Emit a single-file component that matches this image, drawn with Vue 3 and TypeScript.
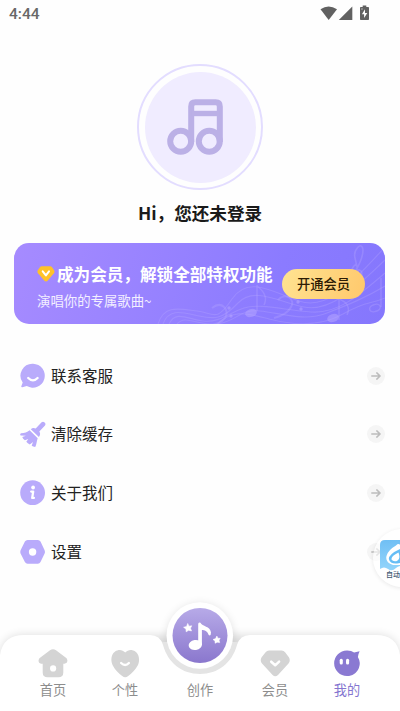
<script setup lang="ts">
interface MenuItem { id: string; label: string }
interface Tab { id: string; label: string }

const menu: MenuItem[] = [
  { id: 'service', label: '联系客服' },
  { id: 'clean', label: '清除缓存' },
  { id: 'about', label: '关于我们' },
  { id: 'settings', label: '设置' },
]
const tabs: Tab[] = [
  { id: 'home', label: '首页' },
  { id: 'style', label: '个性' },
  { id: 'create', label: '创作' },
  { id: 'vip', label: '会员' },
  { id: 'mine', label: '我的' },
]
const active = 'mine'
</script>

<template>
  <div class="screen">
    <header class="status">
      <span class="time">4:44</span>
      <svg class="status-icons" width="50" height="18" viewBox="320 4 50 18" fill="#616161">
        <path d="M320.5 9.3Q328.500 3.500 337 9.300L328.700 20Z" />
        <path d="M352.300 6.500V20H338.800Z" />
        <path d="M360.800 7h1.900V5.400h3.600V7h1.900q.8 0 .8.800v11.400q0 .8-.8.800h-7.400q-.8 0-.8-.8V7.800q0-.8.800-.8Z" />
        <path d="M365 9.300l-3.100 5h2.200v3.800l3.200-5h-2.300Z" fill="#fff" />
        <path d="M361.200 8.400h1.500v1.200h-1.500Z" fill="#ccc" />
      </svg>
    </header>

    <section class="profile">
      <div class="ring">
        <div class="avatar">
          <svg width="58" height="58" viewBox="166 98 58 58" fill="none" stroke="#bbb0e6" stroke-width="6">
            <circle cx="180.700" cy="141.200" r="10.500" />
            <circle cx="209.300" cy="141.200" r="10.500" />
            <path d="M191.200 142V106.500Q191.200 102.300 195.400 102.300H215.600Q219.800 102.300 219.800 106.500V142" />
            <path d="M191.200 113.500H219.800" stroke-width="5.400" />
          </svg>
        </div>
      </div>
      <h1>Hi，您还未登录</h1>
    </section>

    <section class="banner">
      <svg class="staff" width="371" height="81" viewBox="14 243 371 81" fill="none" stroke="#b8a8ff" stroke-opacity=".32" stroke-width="1.100">
        <path d="M158 324C164 304 180 309 197 311S216 323 232 299S273 292 299 301S347 289 385 247" />
        <path d="M163 324C169 307 184 313 199 316S222 320 238 303S279 302 304 307S353 291 385 260" />
        <path d="M169 324C176 310 187 319 203 321S229 313 244 308S284 310 311 312S358 296 385 273" />
        <path d="M177 324C185 314 198 326 217 324S239 309 260 311S304 322 327 313S365 298 385 286" />
        <path d="M214 328C230 307 250 314 269 319S318 328 343 314S369 305 385 298" />
        <path d="M212 308C222 300 230 310 225 318C221 324 214 325 206 325M278 300C285 292 296 299 291 307C288 313 282 316 274 318" stroke-width="2" />
        <path d="M257 285V311M257 286Q269 295 264 305M339 298V320M339 299Q352 304 347 315M381 278V307" stroke-width="1.500" />
        <path d="M350 285C349 277 363 265 363 250C362 240 353 250 355 258L360 280C360 285 353 286 351 281M356 264C349 270 350 279 357 278C364 277 363 269 357 270" stroke-width="1.600" />
        <g fill="#b8a8ff" fill-opacity=".5" stroke="none">
          <ellipse cx="251" cy="313" rx="6" ry="4" transform="rotate(-18 251 313)" />
          <ellipse cx="333" cy="318" rx="6" ry="4" transform="rotate(-18 333 318)" />
          <circle cx="229" cy="308" r="1.700" /><circle cx="231" cy="316" r="1.700" />
          <circle cx="298" cy="302" r="1.700" /><circle cx="301" cy="309" r="1.700" />
        </g>
        <ellipse cx="375" cy="308" rx="5.500" ry="3.500" transform="rotate(-18 375 308)" stroke-width="1.500" />
      </svg>
      <div class="banner-copy">
        <div class="banner-title">
          <svg width="18" height="16" viewBox="0 0 18 16">
            <path d="M4.700.3h8.600q1 0 1.600.8l2.200 3.200q.9 1.500-.2 2.900l-6.300 7.500q-1.600 1.500-3.200 0L1 7.200Q-.1 5.800.8 4.300l2.300-3.200Q3.700.3 4.700.3Z" fill="#ffc229" />
            <path d="M5.700 5.400L8.900 9.400L12 5.400" fill="none" stroke="#fff" stroke-width="2" stroke-linecap="round" stroke-linejoin="round" />
          </svg>
          <strong>成为会员，解锁全部特权功能</strong>
        </div>
        <p>演唱你的专属歌曲~</p>
      </div>
      <button class="open">开通会员</button>
    </section>

    <ul class="menu">
      <li v-for="item in menu" :key="item.id">
        <svg class="menu-icon" width="26" height="26" viewBox="0 0 26 26" fill="#b9abfb">
          <template v-if="item.id === 'service'">
            <path d="M13.100.7A12 12 0 1 1 6.800 23.100L2.300 24.200Q.7 24.400 1.500 22.700L2.700 19.600A12 12 0 0 1 13.100.7Z" />
            <path d="M8.200 15Q13 19.800 17.600 15" fill="none" stroke="#fff" stroke-width="2.300" stroke-linecap="round" />
          </template>
          <template v-else-if="item.id === 'clean'">
            <path d="M15.700 7.500L21.600 1.200Q23.100.1 24.600 1.400T25 4.500L19.300 10.400Q21.100 13.500 18.900 16.100L10.800 8.200Q13 6 15.700 7.500Z" />
            <path d="M9.600 9.300L17.700 17.300C16.600 20.500 16.700 23.500 15.200 26Q12.900 25.800 11.700 24.800L13 21.100L9.800 23.400Q7.600 22.300 6.300 20.800L8.300 18L4.900 19.200Q2.700 17.800 2.300 16.100L5.900 14.800L.7 14.500Q-.5 13.500.9 12.300C4.500 12 7.400 11.400 9.600 9.300Z" />
          </template>
          <template v-else-if="item.id === 'about'">
            <circle cx="12.600" cy="12.700" r="12.400" />
            <circle cx="13.100" cy="7.500" r="1.900" fill="#fff" />
            <path d="M11.200 11.600H13.200L12.200 17.900H13.900" fill="none" stroke="#fff" stroke-width="2.300" stroke-linecap="round" stroke-linejoin="round" />
          </template>
          <template v-else>
            <path d="M7.600 1H17.900Q19.600 1 20.500 2.600L24.500 11Q25.400 12.900 24.500 14.700L20.500 23Q19.600 24.700 17.900 24.700H7.600Q5.800 24.700 4.900 23L.7 14.700Q-.1 12.900.7 11L4.900 2.600Q5.800 1 7.600 1Z" />
            <circle cx="12.600" cy="13" r="3.700" fill="#fff" />
          </template>
        </svg>
        <span>{{ item.label }}</span>
        <svg class="go" width="18" height="18" viewBox="0 0 18 18">
          <circle cx="9" cy="9" r="9" fill="#f5f5f5" />
          <path d="M4.800 9H13M9.800 5.900L13.100 9L9.800 12.100" fill="none" stroke="#bcbcbc" stroke-width="1.500" stroke-linecap="round" stroke-linejoin="round" />
        </svg>
      </li>
    </ul>

    <aside class="float">
      <svg width="28" height="31" viewBox="0 0 28 31">
        <defs><linearGradient id="drop" x2="0" y2="1"><stop stop-color="#70bff4" /><stop offset="1" stop-color="#93d5fb" /></linearGradient></defs>
        <path d="M5 0H28V31H0V5Q0 0 5 0Z" fill="url(#drop)" />
        <path d="M16 5.500Q19 2.500 21 6Q26 4 28 9V25H13Q5 23 6.500 16Q8 10 16 5.500Z" fill="#fff" />
        <path d="M20 9Q9 14 8.800 19Q10 24 17 23.500Q24 23 24 17Q23 13 20 9Z" fill="#66bdf5" />
        <path d="M18.500 12.500Q11 16 11.500 19.500Q13 22 17 21Q21 19.500 18.500 12.500Z" fill="#fff" />
        <path d="M0 29Q4 26 8 29T16 28T28 28V31H0Z" fill="#fff" />
      </svg>
      <span>自动</span>
    </aside>

    <nav class="tabs">
      <svg class="tabs-bg" width="400" height="111" viewBox="0 600 400 111">
        <defs>
          <filter id="lift" x="-30%" y="-30%" width="160%" height="160%"><feGaussianBlur stdDeviation="5" /></filter>
          <linearGradient id="disc" x2="0" y2="1"><stop stop-color="#b7aae8" /><stop offset="1" stop-color="#8a77cd" /></linearGradient>
        </defs>
        <path d="M0 657Q2 635 24 635H376Q398 635 400 657V711H0Z" fill="#000" opacity=".13" filter="url(#lift)" />
        <circle cx="200" cy="637" r="33" fill="#000" opacity=".12" filter="url(#lift)" />
        <path d="M162 642H238V674H162Z" fill="#e4e4e4" />
        <path d="M0 711V655Q3 635 24 635H150Q160 635 163 645C168 663 182 674 200 674S232 663 237 645Q240 635 250 635H376Q397 635 400 655V711Z" fill="#fff" />
        <circle cx="199.800" cy="635.500" r="33.300" fill="#fff" />
        <circle cx="200" cy="635.500" r="27.500" fill="url(#disc)" />
        <g fill="#fff">
          <ellipse cx="195.300" cy="645" rx="6.700" ry="5" transform="rotate(-9 195.300 645)" />
          <path d="M198.200 645V624.200Q198.200 621.700 200.500 622.700C202 626.500 210.500 626 211 632.500Q210.900 636.500 208.700 635C207.500 630.800 204.500 630 201.900 629.900V645Z" />
          <path d="M187.700 623.500L189 626.200L191.700 625.800L190.500 628.200L191.500 630.900L188.600 630.300L186.200 631.800L186 629L183.600 627.300L186.600 626.500Z" stroke="#fff" stroke-width=".6" stroke-linejoin="round" />
          <path d="M216.900 636L217.900 638.200L220.200 638.300L219.100 640.300L219.700 642.600L217.200 642.200L215.100 643.300L215 641L213 639.500L215.600 638.600Z" stroke="#fff" stroke-width=".5" stroke-linejoin="round" />
        </g>
      </svg>
      <div class="tab-row">
        <a v-for="tab in tabs" :key="tab.id" class="tab" :class="{ active: tab.id === active }">
          <svg width="30" height="30" viewBox="0 0 30 30" fill="#d4d4d4">
            <template v-if="tab.id === 'home'">
              <path d="M12 2.200Q15 .5 18 2.200L28.600 10.200Q31 14.800 26.500 15.800H25.300V24.500Q25.300 29.300 20.500 29.300H9.500Q4.700 29.300 4.700 24.500V15.800H3Q-1 14.700 1.400 10.200Z" />
              <circle cx="15.100" cy="20.400" r="3.100" fill="#fff" />
            </template>
            <template v-else-if="tab.id === 'style'">
              <path d="M15.200 4.600C18 1.400 22 1.300 25.300 3.500C29.500 6.500 30 13 27.700 17.500C25.200 22.200 21.500 25.200 18.200 28.100Q15.200 30.500 12.200 28.100C8.900 25.200 5.100 22.200 2.800 17.500C.4 13 .9 6.500 5.100 3.500C8.400 1.300 12.400 1.400 15.200 4.600Z" />
              <path d="M11.100 15Q15.200 18.900 18.900 15" fill="none" stroke="#fff" stroke-width="2.400" stroke-linecap="round" />
            </template>
            <template v-else-if="tab.id === 'vip'">
              <path d="M9 2.500H21.600Q23.800 2.500 25.100 4.300L28.900 9.300Q30.800 12.500 28.500 15.500L18 27Q15.200 29.700 12.600 27L2 15.500Q-.3 12.500 1.600 9.300L5.600 4.300Q6.900 2.500 9 2.500Z" />
              <path d="M11.200 13.700L15.200 17.300L19.100 13.700" fill="none" stroke="#fff" stroke-width="2.500" stroke-linecap="round" stroke-linejoin="round" />
            </template>
            <template v-else-if="tab.id === 'mine'">
              <path d="M14.900 2.400Q19.300 2.300 22.100 4.500L27.600 3.300Q26.500 5.500 25.900 9Q29 14.500 26.900 20C24.500 25.600 20 28.100 15 28A12.800 12.800 0 1 1 14.900 2.400Z" fill="#8a79d2" />
              <rect x="7.700" y="10.700" width="3.100" height="5.800" rx="1.500" fill="#fff" />
              <rect x="14" y="10.700" width="3.100" height="5.800" rx="1.500" fill="#fff" />
            </template>
          </svg>
          <span>{{ tab.label }}</span>
        </a>
      </div>
    </nav>
  </div>
</template>

<style>
body { margin: 0; background: #fff; }
</style>

<style scoped>
* { box-sizing: border-box; }
.screen {
  position: relative;
  display: flex;
  flex-direction: column;
  width: 400px;
  height: 711px;
  overflow: hidden;
  background: #fefefe;
  font-family: "Noto Sans CJK SC", sans-serif;
}
svg { display: block; flex: none; }
.status {
  display: flex;
  justify-content: space-between;
  height: 28px;
  padding: 4px 30px 0 9px;
}
.time { font: 500 15.500px/20px Roboto, sans-serif; color: #686868; }
.profile { display: flex; flex-direction: column; align-items: center; padding-top: 36px; }
.ring {
  display: grid;
  place-items: center;
  width: 126px;
  height: 126px;
  border: 2px solid #e3ddff;
  border-radius: 50%;
}
.avatar {
  display: grid;
  place-items: center;
  width: 111px;
  height: 111px;
  padding-right: 10px;
  border-radius: 50%;
  background: #f0ecff;
}
h1 { margin: 10px 0 0; font-size: 17.600px; font-weight: 700; line-height: 26px; color: #1a1a1a; }
.banner {
  position: relative;
  display: flex;
  justify-content: space-between;
  align-items: center;
  width: 371px;
  height: 81px;
  margin: 17px 0 0 14px;
  padding: 0 20px 0 23px;
  border-radius: 15px;
  overflow: hidden;
  background: linear-gradient(105deg, #a68bff 0%, #8b7bff 70%, #8577fd 100%);
}
.staff { position: absolute; inset: 0; }
.banner-copy { position: relative; padding-top: 4px; color: #fff; white-space: nowrap; }
.banner-title { display: flex; align-items: center; gap: 2px; }
.banner-title strong { font-size: 16.600px; font-weight: 700; line-height: 26px; }
.banner-copy p { margin: 2px 0 0; font-size: 13.400px; line-height: 22px; color: #f3efff; }
.open {
  position: relative;
  flex: none;
  width: 83px;
  height: 30px;
  padding: 0;
  border: 0;
  border-radius: 15px;
  background: linear-gradient(110deg, #ffe391, #ffc86c);
  font: 500 13.300px/29px "Noto Sans CJK SC", sans-serif;
  color: #2c1b04;
}
.menu { margin: 0; padding: 22.500px 15px 0 20px; list-style: none; }
.menu li { display: flex; align-items: center; height: 58.600px; }
.menu span { margin-left: 5px; padding-bottom: 2px; font-size: 15.500px; line-height: 24px; color: #222; }
.go { margin-left: auto; }
.float {
  position: absolute;
  left: 373px;
  top: 529px;
  width: 58px;
  height: 58px;
  padding: 11px 0 0 7px;
  border-radius: 50%;
  background: rgba(255, 255, 255, .6);
  box-shadow: 0 1px 4px rgba(0, 0, 0, .09);
}
.float span { display: block; margin: -2px 0 0 6px; font-size: 7px; font-weight: 500; line-height: 11px; color: #3e566e; white-space: nowrap; }
.tabs { position: relative; height: 111px; margin-top: auto; }
.tabs-bg { position: absolute; inset: 0; overflow: visible; }
.tab-row { position: relative; display: grid; grid-template-columns: 72px 72px 78px 72px 72px; padding: 48px 17px 0; }
.tab { display: flex; flex-direction: column; align-items: center; gap: 2px; color: #8d8d8d; }
.tab span { font-size: 13.200px; line-height: 20px; }
.tab.active { color: #8576d0; }
</style>
